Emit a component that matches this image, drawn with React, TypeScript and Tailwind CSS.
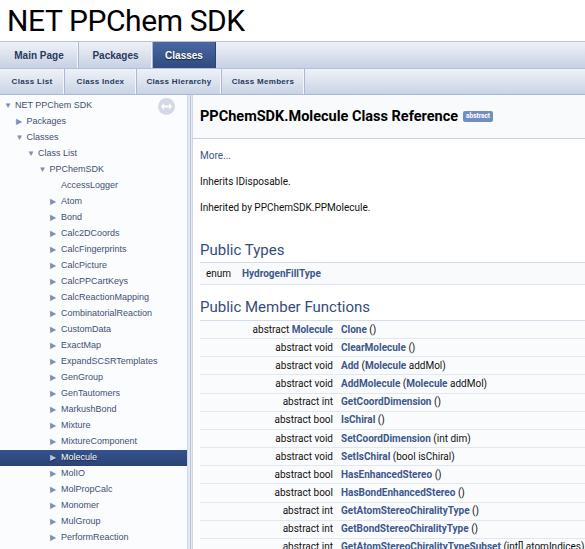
import React from "react";

type Arrow = "down" | "right" | "none";

const navItems: [string, number, Arrow][] = [
  ["NET PPChem SDK", 0, "down"],
  ["Packages", 1, "right"],
  ["Classes", 1, "down"],
  ["Class List", 2, "down"],
  ["PPChemSDK", 3, "down"],
  ["AccessLogger", 4, "none"],
  ["Atom", 4, "right"],
  ["Bond", 4, "right"],
  ["Calc2DCoords", 4, "right"],
  ["CalcFingerprints", 4, "right"],
  ["CalcPicture", 4, "right"],
  ["CalcPPCartKeys", 4, "right"],
  ["CalcReactionMapping", 4, "right"],
  ["CombinatorialReaction", 4, "right"],
  ["CustomData", 4, "right"],
  ["ExactMap", 4, "right"],
  ["ExpandSCSRTemplates", 4, "right"],
  ["GenGroup", 4, "right"],
  ["GenTautomers", 4, "right"],
  ["MarkushBond", 4, "right"],
  ["Mixture", 4, "right"],
  ["MixtureComponent", 4, "right"],
  ["Molecule", 4, "right"],
  ["MolIO", 4, "right"],
  ["MolPropCalc", 4, "right"],
  ["Monomer", 4, "right"],
  ["MulGroup", 4, "right"],
  ["PerformReaction", 4, "right"],
];

type Member = { type: string; typeLink?: string; name: string; args: React.ReactNode };

const L = ({ children }: { children: React.ReactNode }) => (
  <span className="font-bold text-[#3d578c]">{children}</span>
);

const members: Member[] = [
  { type: "abstract ", typeLink: "Molecule", name: "Clone", args: "()" },
  { type: "abstract void", name: "ClearMolecule", args: "()" },
  { type: "abstract void", name: "Add", args: <>(<L>Molecule</L> addMol)</> },
  { type: "abstract void", name: "AddMolecule", args: <>(<L>Molecule</L> addMol)</> },
  { type: "abstract int", name: "GetCoordDimension", args: "()" },
  { type: "abstract bool", name: "IsChiral", args: "()" },
  { type: "abstract void", name: "SetCoordDimension", args: "(int dim)" },
  { type: "abstract void", name: "SetIsChiral", args: "(bool isChiral)" },
  { type: "abstract bool", name: "HasEnhancedStereo", args: "()" },
  { type: "abstract bool", name: "HasBondEnhancedStereo", args: "()" },
  { type: "abstract int", name: "GetAtomStereoChiralityType", args: "()" },
  { type: "abstract int", name: "GetBondStereoChiralityType", args: "()" },
  { type: "abstract int", name: "GetAtomStereoChiralityTypeSubset", args: "(int[] atomIndices)" },
];

const tabs1 = [
  { label: "Main Page", w: "w-[79px]" },
  { label: "Packages", w: "w-[74px]" },
  { label: "Classes", w: "w-[63px]", active: true },
];

const tabs2 = [
  { label: "Class List", w: "w-[65px]" },
  { label: "Class Index", w: "w-[72px]" },
  { label: "Class Hierarchy", w: "w-[85px]" },
  { label: "Class Members", w: "w-[83px]" },
];

function SyncIcon() {
  return (
    <svg width="17" height="17" viewBox="0 0 17 17" className="absolute left-[158px] top-[3px]">
      <circle cx="8.5" cy="8.5" r="8.5" fill="#d3d9e6" />
      <path d="M5 8.5h7" stroke="#fff" strokeWidth="1.8" />
      <path d="M2.8 8.5l3.2-3.2v6.4z M14.2 8.5l-3.2-3.2v6.4z" fill="#fff" />
    </svg>
  );
}

export default function App() {
  return (
    <div className="w-[585px] h-[549px] overflow-hidden bg-white flex flex-col font-['Roboto',sans-serif]">
      {/* project title */}
      <div className="h-[41px] shrink-0 pl-[7px] flex items-center text-[30px] tracking-[-0.4px] text-black leading-none">
        <span className="pt-[1px]">NET PPChem SDK</span>
      </div>

      {/* main tabs */}
      <div className="h-[27px] shrink-0 flex border-t border-[#b7c4dd] bg-gradient-to-b from-[#eef1f7] via-[#dbe2ee] to-[#c7d1e4] font-['Liberation_Sans',Arial,sans-serif]">
        {tabs1.map((t) => (
          <div
            key={t.label}
            className={`${t.w} h-full flex items-center justify-center text-[10px] font-bold border-r ${
              t.active
                ? "bg-gradient-to-b from-[#4a67a0] to-[#2f4b80] text-white [text-shadow:0_1px_1px_rgba(0,0,0,0.6)] border-[#2b4272]"
                : "text-[#283a5d] border-[#a9b8d4] shadow-[inset_-1px_0_0_#f3f6fb]"
            }`}
          >
            {t.label}
          </div>
        ))}
      </div>

      {/* sub tabs */}
      <div className="h-[27px] shrink-0 flex border-t border-[#b3c0da] border-b border-b-[#a9b8d4] bg-gradient-to-b from-[#eef1f7] via-[#dde3ef] to-[#c9d3e5] font-['Liberation_Sans',Arial,sans-serif]">
        {tabs2.map((t) => (
          <div
            key={t.label}
            className={`${t.w} h-full flex items-center justify-center text-[8px] font-bold tracking-[0.3px] text-[#283a5d] border-r border-[#a9b8d4] shadow-[inset_-1px_0_0_#f3f6fb]`}
          >
            {t.label}
          </div>
        ))}
      </div>

      <div className="flex-1 flex min-h-0">
        {/* nav tree */}
        <div className="relative w-[187px] shrink-0 bg-[#fbfcfd] pt-[3px] overflow-hidden font-['Liberation_Sans',Arial,sans-serif]">
          <SyncIcon />
          {navItems.map(([label, level, arrow]) => {
            const selected = label === "Molecule";
            return (
              <div
                key={label}
                className={`h-[16px] flex items-center text-[9px] whitespace-nowrap ${
                  selected
                    ? "bg-gradient-to-b from-[#34538c] to-[#2a4478] text-white [text-shadow:0_1px_1px_rgba(0,0,0,0.5)]"
                    : "text-[#3f5074]"
                }`}
                style={{ paddingLeft: 4 + level * 11.5 }}
              >
                <span className={`w-[11px] text-[8px] leading-none ${selected ? "text-[#b7c4de]" : "text-[#7f90b3]"}`}>
                  {arrow === "down" ? "▼" : arrow === "right" ? "▶" : ""}
                </span>
                <span>{label}</span>
              </div>
            );
          })}
        </div>

        {/* splitter */}
        <div className="w-[6px] shrink-0 bg-[#e3e8f1] border-x border-[#cfd7e6] flex justify-center">
          <div className="w-px h-full bg-[#bcc7dc]" />
        </div>

        {/* content */}
        <div className="flex-1 min-w-0 flex flex-col">
          <div className="h-[44px] shrink-0 bg-[#f9fafc] border-b border-[#c4cfe5] pl-[7px] flex items-center whitespace-nowrap">
            <span className="text-[14.5px] font-bold text-black">PPChemSDK.Molecule Class Reference</span>
            <span className="ml-[5px] h-[11px] px-[3px] rounded-[2px] bg-[#728dc1] text-white text-[6.5px] font-bold leading-[11px]">
              abstract
            </span>
          </div>

          <div className="pl-[7px] text-[10px] leading-[12px] text-[#111] whitespace-nowrap">
            <p className="mt-[11px] text-[#3d578c]">More...</p>
            <p className="mt-[14px]">Inherits IDisposable.</p>
            <p className="mt-[14px]">Inherited by PPChemSDK.PPMolecule.</p>

            <h2 className="mt-[27px] text-[15px] leading-[18px] text-[#354c7b] pb-[3px] border-b border-[#d5dcea]">
              Public Types
            </h2>
            <div className="h-[22px] flex items-center bg-[#f9fafc] border-b border-[#dee4f0]">
              <span className="w-[39px] pl-[6px]">enum</span>
              <span className="pl-[3px] font-bold text-[#3d578c]">HydrogenFillType</span>
            </div>

            <h2 className="mt-[13px] text-[15px] leading-[18px] text-[#354c7b] pb-[4px] border-b border-[#d5dcea]">
              Public Member Functions
            </h2>
            {members.map((m) => (
              <div key={m.name} className="h-[18.17px] flex items-center bg-[#fafbfc] border-b border-[#e3e7ef]">
                <span className="w-[137px] text-right pr-[4px]">
                  {m.type}
                  {m.typeLink && <L>{m.typeLink}</L>}
                </span>
                <span className="pl-[4px]">
                  <L>{m.name}</L> {m.args}
                </span>
              </div>
            ))}
          </div>
        </div>
      </div>
    </div>
  );
}
